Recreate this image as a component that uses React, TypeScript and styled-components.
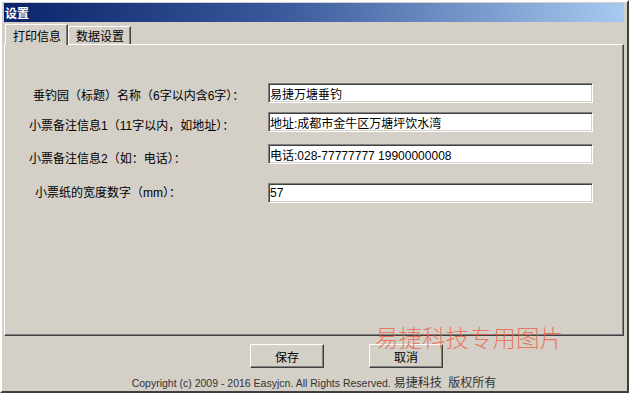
import styled, { createGlobalStyle } from "styled-components"

const Global = createGlobalStyle`
  html, body {
    margin: 0;
    padding: 0;
    background: #d4d0c8;
  }
  body {
    font-family: "Liberation Sans", "Noto Sans CJK SC", sans-serif;
    font-size: 12px;
    color: #000;
  }
`

const Frame = styled.div`
  position: relative;
  box-sizing: border-box;
  width: 629px;
  height: 393px;
  background: #d4d0c8;
  border-top: 2px solid #fff;
  border-left: 2px solid #fff;
  border-right: 2px solid #404040;
  border-bottom: 2px solid #404040;
  padding: 1px 3px 0 2px;
  display: flex;
  flex-direction: column;
  overflow: hidden;
`

const TitleBar = styled.div`
  height: 19px;
  display: flex;
  align-items: center;
  padding-left: 1px;
  background: linear-gradient(90deg, #0a246a 0%, #3a5a9c 45%, #a6caf0 100%);
  color: #fff;
  font-weight: bold;
  font-size: 12px;
`

const TabStrip = styled.div`
  display: flex;
  align-items: flex-end;
  height: 21px;
  padding-left: 1px;
  margin-top: 1px;
`

const Tab = styled.div<{ $active?: boolean }>`
  position: relative;
  z-index: 1;
  box-sizing: border-box;
  height: ${(p) => (p.$active ? "21px" : "18px")};
  margin-bottom: ${(p) => (p.$active ? "-1px" : "0")};
  padding: 0 6px 0 7px;
  display: flex;
  align-items: center;
  background: #d4d0c8;
  border-top: 1px solid #fff;
  border-left: 1px solid #fff;
  border-right: 1px solid #404040;
  box-shadow: inset -1px 0 0 #808080;
  font-size: 12px;
  white-space: nowrap;
`

const Panel = styled.div`
  box-sizing: border-box;
  height: 292px;
  border-top: 1px solid #fff;
  border-left: 1px solid #fff;
  border-right: 1px solid #404040;
  border-bottom: 1px solid #404040;
  box-shadow: inset -1px -1px 0 #808080;
  padding-top: 38px;
  display: flex;
  flex-direction: column;
`

const Row = styled.div<{ $gap: number }>`
  display: flex;
  align-items: flex-start;
  height: 20px;
  margin-top: ${(p) => p.$gap}px;
`

const Label = styled.div<{ $indent: number; $shift: number }>`
  box-sizing: border-box;
  flex: 0 0 263px;
  padding-left: ${(p) => p.$indent}px;
  margin-top: ${(p) => p.$shift}px;
  line-height: 20px;
  font-size: 12px;
  white-space: nowrap;
`

const Field = styled.input`
  box-sizing: border-box;
  width: 325px;
  height: 20px;
  margin: 0;
  padding: 0 0 0 1px;
  background: #fff;
  border-top: 1px solid #808080;
  border-left: 1px solid #808080;
  border-right: 1px solid #fff;
  border-bottom: 1px solid #fff;
  box-shadow: inset 1px 1px 0 #404040, inset -1px -1px 0 #d4d0c8;
  font-family: "Liberation Sans", "Noto Sans CJK SC", sans-serif;
  font-size: 12px;
  color: #000;
  outline: none;
`

const ButtonRow = styled.div`
  display: flex;
  gap: 45px;
  padding-left: 246px;
  margin-top: 8px;
`

const Button = styled.button`
  box-sizing: border-box;
  width: 74px;
  height: 24px;
  margin: 0;
  padding: 0;
  background: #d4d0c8;
  border-top: 1px solid #fff;
  border-left: 1px solid #fff;
  border-right: 1px solid #404040;
  border-bottom: 1px solid #404040;
  box-shadow: inset -1px -1px 0 #808080;
  font-family: "Liberation Sans", "Noto Sans CJK SC", sans-serif;
  font-size: 12px;
  color: #000;
`

const Copyright = styled.div`
  margin-top: 8px;
  text-align: center;
  line-height: 14px;
  font-size: 10.5px;
  color: #333;
  white-space: nowrap;

  span {
    font-size: 12px;
  }
`

const Watermark = styled.div`
  position: absolute;
  left: 373px;
  top: 320px;
  font-family: "Noto Sans CJK SC", sans-serif;
  font-weight: 300;
  font-size: 23.5px;
  line-height: 30px;
  color: rgba(238, 90, 60, 0.75);
  pointer-events: none;
  white-space: nowrap;
`

const fields = [
  { label: "垂钓园（标题）名称（6字以内含6字）：", value: "易捷万塘垂钓", gap: 0, indent: 28, shift: 3 },
  { label: "小票备注信息1（11字以内，如地址）：", value: "地址:成都市金牛区万塘坪饮水湾", gap: 9, indent: 24, shift: 4 },
  { label: "小票备注信息2（如：电话）：", value: "电话:028-77777777 19900000008", gap: 12, indent: 24, shift: 5 },
  { label: "小票纸的宽度数字（mm）：", value: "57", gap: 19, indent: 30, shift: 0 },
]

export default function App() {
  return (
    <Frame>
      <Global />
      <TitleBar>设置</TitleBar>
      <TabStrip>
        <Tab $active>打印信息</Tab>
        <Tab>数据设置</Tab>
      </TabStrip>
      <Panel>
        {fields.map((f) => (
          <Row key={f.label} $gap={f.gap}>
            <Label $indent={f.indent} $shift={f.shift}>
              {f.label}
            </Label>
            <Field defaultValue={f.value} />
          </Row>
        ))}
      </Panel>
      <ButtonRow>
        <Button>保存</Button>
        <Button>取消</Button>
      </ButtonRow>
      <Copyright>
        Copyright (c) 2009 - 2016 Easyjcn. All Rights Reserved. <span>易捷科技&nbsp; 版权所有</span>
      </Copyright>
      <Watermark>易捷科技专用图片</Watermark>
    </Frame>
  )
}
